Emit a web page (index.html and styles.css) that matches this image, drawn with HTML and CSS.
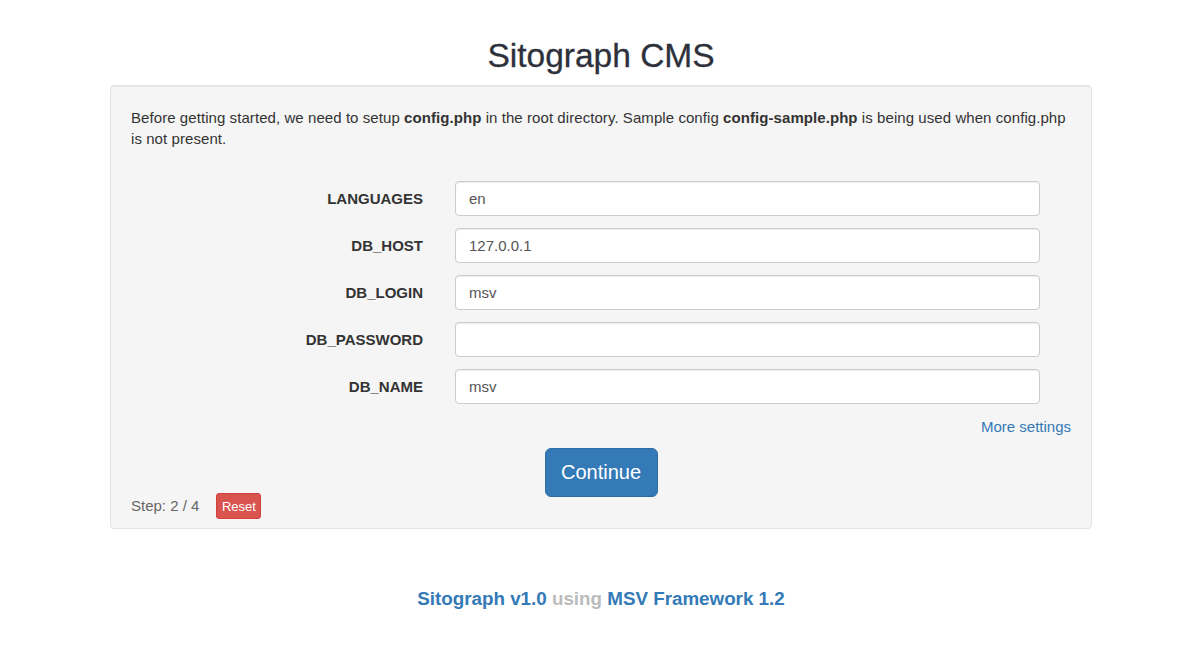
FILE: index.html
```html
<!DOCTYPE html>
<html>
<head>
<meta charset="utf-8">
<title>Sitograph CMS</title>
<link rel="stylesheet" href="styles.css">
</head>
<body>
<div class="container">
  <h1 class="title">Sitograph CMS</h1>
  <div class="well">
    <p class="intro">Before getting started, we need to setup <b>config.php</b> in the root directory. Sample config <b>config-sample.php</b> is being used when config.php is not present.</p>
    <form class="form">
      <div class="row">
        <label class="label">LANGUAGES</label>
        <div class="field"><input class="input" type="text" value="en"></div>
      </div>
      <div class="row">
        <label class="label">DB_HOST</label>
        <div class="field"><input class="input" type="text" value="127.0.0.1"></div>
      </div>
      <div class="row">
        <label class="label">DB_LOGIN</label>
        <div class="field"><input class="input" type="text" value="msv"></div>
      </div>
      <div class="row">
        <label class="label">DB_PASSWORD</label>
        <div class="field"><input class="input" type="text" value=""></div>
      </div>
      <div class="row">
        <label class="label">DB_NAME</label>
        <div class="field"><input class="input" type="text" value="msv"></div>
      </div>
      <div class="more"><a href="#" class="link">More settings</a></div>
      <div class="actions"><button type="button" class="btn-primary">Continue</button></div>
    </form>
    <div class="step">
      <span class="step-text">Step: 2 / 4</span>
      <a href="#" class="btn-reset">Reset</a>
    </div>
  </div>
  <div class="footer">
    <a href="#" class="foot-link">Sitograph v1.0</a> <span class="using">using</span> <a href="#" class="foot-link">MSV Framework 1.2</a>
  </div>
</div>
</body>
</html>
```

FILE: styles.css
```css
* { box-sizing: border-box; }
html, body { margin: 0; padding: 0; background: #fff; }
body {
  font-family: "Liberation Sans", Arial, sans-serif;
  font-size: 15px;
  line-height: 21px;
  color: #333;
}
.container {
  width: 982px;
  margin: 0 0 0 110px;
}
.title {
  margin: 0;
  padding-top: 36px;
  height: 85px;
  text-align: center;
  font-size: 33.5px;
  line-height: 40px;
  font-weight: normal;
  color: #2d313b;
  -webkit-text-stroke: 0.3px #2d313b;
}
.well {
  background: #f5f5f5;
  border: 1px solid #e3e3e3;
  border-radius: 4px;
  box-shadow: inset 0 1px 1px rgba(0,0,0,.05);
  padding: 19px 20px 7px 20px;
  height: 444px;
}
.intro {
  margin: 2px 0 0 0;
  letter-spacing: 0.07px;
}
.form {
  margin-top: 32px;
}
.row {
  display: flex;
  align-items: center;
  height: 35px;
  margin-bottom: 12px;
}
.label {
  width: 292px;
  text-align: right;
  font-weight: bold;
  color: #333;
}
.field {
  margin-left: 32px;
  width: 585px;
}
.input {
  display: block;
  width: 100%;
  height: 35px;
  padding: 6px 13px;
  font-family: inherit;
  font-size: 15px;
  color: #555;
  background: #fff;
  border: 1px solid #ccc;
  border-radius: 4px;
  box-shadow: inset 0 1px 1px rgba(0,0,0,.075);
  outline: none;
}
.more {
  display: flex;
  justify-content: flex-end;
  padding-right: 0;
}
.link {
  color: #337ab7;
  text-decoration: none;
}
.actions {
  display: flex;
  justify-content: center;
  margin-top: 11px;
}
.btn-primary {
  width: 113px;
  height: 49px;
  font-family: inherit;
  font-size: 20px;
  color: #fff;
  background: #337ab7;
  border: 1px solid #2e6da4;
  border-radius: 6px;
  padding: 0;
}
.step {
  display: flex;
  align-items: center;
  margin-top: -5px;
  height: 26px;
}
.step-text {
  color: #666;
}
.btn-reset {
  margin-left: 17px;
  margin-top: 2px;
  display: inline-flex;
  align-items: center;
  justify-content: center;
  width: 45px;
  height: 26px;
  font-size: 13px;
  color: #fff;
  background: #d9534f;
  border: 1px solid #d43f3a;
  border-radius: 3px;
  text-decoration: none;
}
.footer {
  margin-top: 59px;
  text-align: center;
  font-size: 18.8px;
  line-height: 22px;
  font-weight: bold;
}
.foot-link {
  color: #337ab7;
  text-decoration: none;
}
.using {
  color: #bbb;
}
```
